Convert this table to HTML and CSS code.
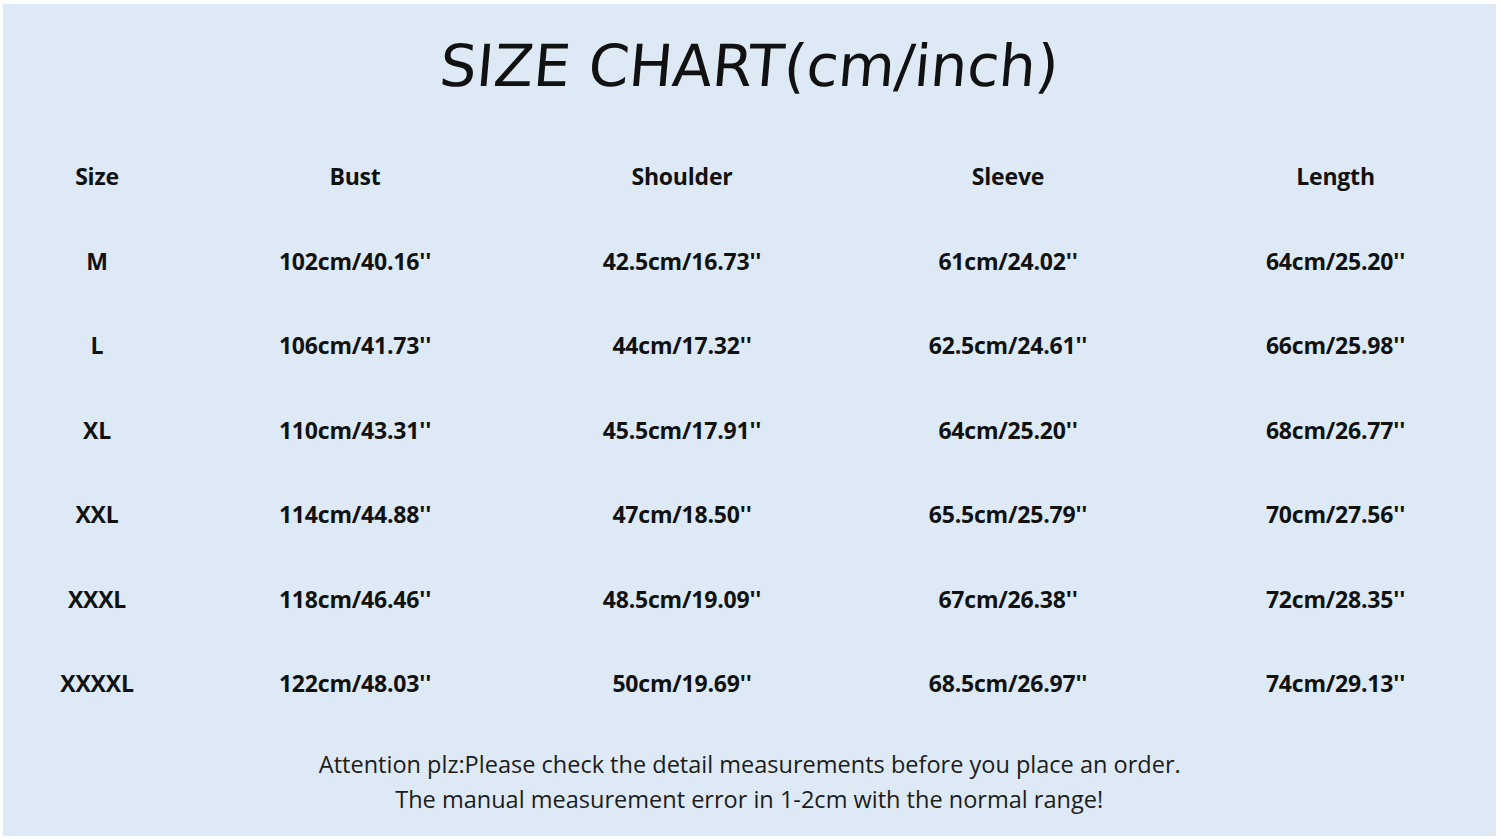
FILE: index.html
```html
<!DOCTYPE html>
<html lang="en">
<head>
<meta charset="utf-8">
<title>Size Chart</title>
<link rel="stylesheet" href="styles.css">
</head>
<body>
<div class="chart">
  <h1 class="title"><span>SIZE CHART(cm/inch)</span></h1>
  <div class="table">
    <div class="cell head">Size</div><div class="cell head">Bust</div><div class="cell head">Shoulder</div><div class="cell head">Sleeve</div><div class="cell head">Length</div>
    <div class="cell">M</div><div class="cell">102cm/40.16''</div><div class="cell">42.5cm/16.73''</div><div class="cell">61cm/24.02''</div><div class="cell">64cm/25.20''</div>
    <div class="cell">L</div><div class="cell">106cm/41.73''</div><div class="cell">44cm/17.32''</div><div class="cell">62.5cm/24.61''</div><div class="cell">66cm/25.98''</div>
    <div class="cell">XL</div><div class="cell">110cm/43.31''</div><div class="cell">45.5cm/17.91''</div><div class="cell">64cm/25.20''</div><div class="cell">68cm/26.77''</div>
    <div class="cell">XXL</div><div class="cell">114cm/44.88''</div><div class="cell">47cm/18.50''</div><div class="cell">65.5cm/25.79''</div><div class="cell">70cm/27.56''</div>
    <div class="cell">XXXL</div><div class="cell">118cm/46.46''</div><div class="cell">48.5cm/19.09''</div><div class="cell">67cm/26.38''</div><div class="cell">72cm/28.35''</div>
    <div class="cell">XXXXL</div><div class="cell">122cm/48.03''</div><div class="cell">50cm/19.69''</div><div class="cell">68.5cm/26.97''</div><div class="cell">74cm/29.13''</div>
  </div>
  <div class="note">
    <p><span>Attention plz:Please check the detail measurements before you place an order.</span></p>
    <p><span>The manual measurement error in 1-2cm with the normal range!</span></p>
  </div>
</div>
</body>
</html>
```
FILE: styles.css
```css
html, body {
  margin: 0;
  padding: 0;
  background: #ffffff;
}
.chart {
  margin: 4px 4px 0 3px;
  height: 832px;
  background: #dde9f4;
  color: #111111;
  font-family: "Open Sans", "Liberation Sans", sans-serif;
  overflow: hidden;
}
.title {
  margin: 0;
  height: 130px;
  padding-top: 27px;
  box-sizing: border-box;
  text-align: center;
  font-family: "DejaVu Sans", sans-serif;
  font-weight: 400;
  font-size: 58px;
  line-height: 70px;
  color: #111;
}
.title span {
  display: inline-block;
  transform: skewX(-5deg);
}
.table {
  display: grid;
  grid-template-columns: 188px 328px 326px 326px 329px;
  grid-auto-rows: 84.5px;
}
.cell {
  display: flex;
  align-items: center;
  justify-content: center;
  font-weight: 700;
  font-size: 23px;
  letter-spacing: -0.2px;
}
.note {
  padding-top: 20px;
  text-align: center;
  font-size: 24px;
  line-height: 35px;
  color: #1c1c1c;
}
.note p {
  margin: 0;
}
.note span {
  display: inline-block;
  transform: scaleX(0.98);
  white-space: nowrap;
}
```
